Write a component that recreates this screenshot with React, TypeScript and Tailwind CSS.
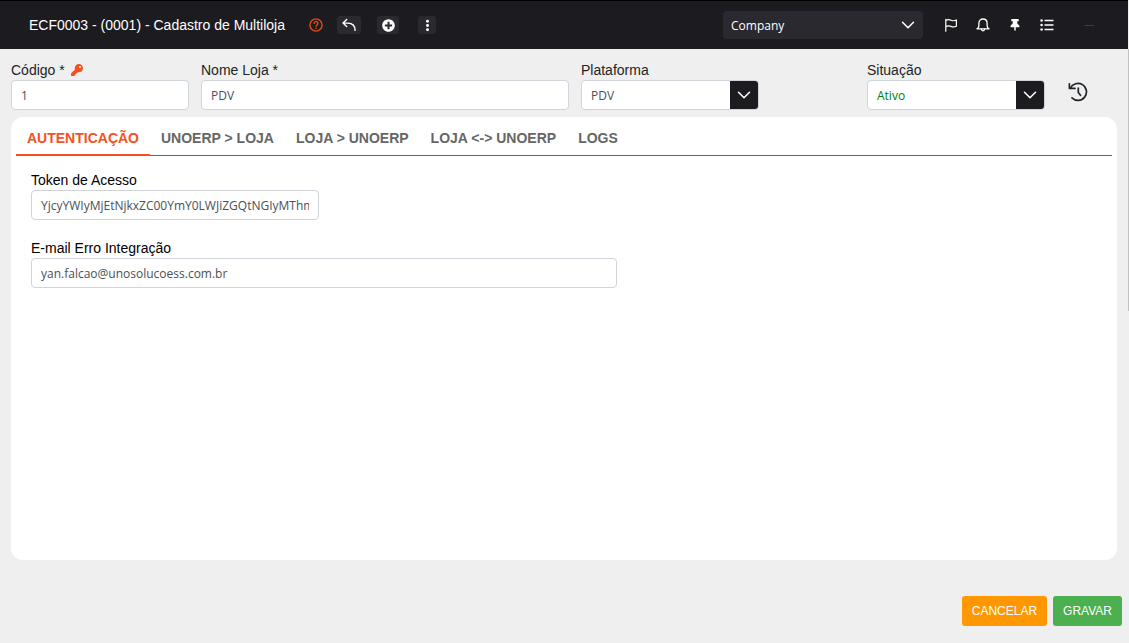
import type { ReactNode } from "react";
import { FaKey, FaPlusCircle, FaThumbtack } from "react-icons/fa";

interface IconProps {
  className?: string;
}

function ChevronIcon({ className }: IconProps) {
  return (
    <svg viewBox="0 0 14 14" fill="none" stroke="currentColor" strokeWidth="1.6" strokeLinecap="round" strokeLinejoin="round" className={className}>
      <path d="M1.5 4.3 7 9.7l5.5-5.4" />
    </svg>
  );
}

function HelpIcon({ className }: IconProps) {
  return (
    <svg viewBox="0 0 14 14" fill="none" stroke="currentColor" strokeWidth="1.4" strokeLinecap="round" strokeLinejoin="round" className={className}>
      <circle cx="7" cy="7" r="6.1" />
      <path d="M5.1 5.4a1.9 1.9 0 1 1 2.9 1.6c-.7.4-1 .7-1 1.300" />
      <path d="M7 10.300v.1" />
    </svg>
  );
}

function ReplyIcon({ className }: IconProps) {
  return (
    <svg viewBox="0 0 14 14" fill="none" stroke="currentColor" strokeWidth="1.4" strokeLinecap="round" strokeLinejoin="round" className={className}>
      <path d="M4.7 1.6 1 5.1l3.7 3.5M1.2 5.1h4.6c4.4 0 7.3 2.6 7.3 7.3" />
    </svg>
  );
}

function DotsIcon({ className }: IconProps) {
  return (
    <svg viewBox="0 0 14 14" fill="currentColor" className={className}>
      <circle cx="7" cy="2.4" r="1.6" />
      <circle cx="7" cy="7" r="1.6" />
      <circle cx="7" cy="11.6" r="1.6" />
    </svg>
  );
}

function FlagIcon({ className }: IconProps) {
  return (
    <svg viewBox="0 0 14 14" fill="none" stroke="currentColor" strokeWidth="1.2" strokeLinecap="round" strokeLinejoin="round" className={className}>
      <path d="M1.8 1.4v11.8M1.8 2.6c1.7-1.2 3.4-1.2 5.2-.4 1.8.8 3.5.8 5.4-.2v6.2c-1.9 1-3.6 1-5.4.2-1.8-.8-3.5-.8-5.2.3" />
    </svg>
  );
}

function BellIcon({ className }: IconProps) {
  return (
    <svg viewBox="0 0 14 14" fill="none" stroke="currentColor" strokeWidth="1.3" strokeLinecap="round" strokeLinejoin="round" className={className}>
      <path d="M1 10.8c1.4-.9 1.9-1.8 1.9-3.4V5.2C2.9 2.7 4.6 1 7 1s4.1 1.7 4.1 4.2v2.2c0 1.6.5 2.5 1.900 3.400z" />
      <path d="M5.4 11c.1 1.2.7 1.900 1.600 1.900s1.500-.7 1.600-1.900" />
    </svg>
  );
}

function ListIcon({ className }: IconProps) {
  return (
    <svg viewBox="0 0 14 14" fill="currentColor" className={className}>
      <path d="M4.5 1.800h9v1.500h-9zM4.500 6.300h9v1.500h-9zM4.500 10.800h9v1.500h-9z" />
      <circle cx="1.6" cy="2.5" r="1.300" />
      <circle cx="1.6" cy="7" r="1.300" />
      <circle cx="1.6" cy="11.5" r="1.300" />
    </svg>
  );
}

function HistoryIcon({ className }: IconProps) {
  return (
    <svg viewBox="0 0 20 20" fill="none" stroke="currentColor" strokeWidth="1.7" strokeLinecap="round" strokeLinejoin="round" className={className}>
      <path d="M1.4 1.800v4.600h5.600" />
      <path d="M2.300 6.200A8.500 8.500 0 1 1 4 15.900" />
      <path d="M10.300 6v4.500l2.200 2.800" />
    </svg>
  );
}

const fieldClass =
  "block h-[30px] w-full rounded border border-[#ced4da] bg-white px-[9px] font-['Open_Sans',sans-serif] text-xs";

interface FieldProps {
  id: string;
  label: string;
  value: string;
  icon?: ReactNode;
}

function TextField({ id, label, value, icon }: FieldProps) {
  return (
    <div>
      <label htmlFor={id} className="flex items-center gap-[6px] text-sm leading-5">
        {label}
        {icon}
      </label>
      <input id={id} type="text" defaultValue={value} className={`${fieldClass} text-[#495057]`} />
    </div>
  );
}

function SelectField({ id, label, value, color }: FieldProps & { color: string }) {
  return (
    <div>
      <label htmlFor={id} className="block text-sm leading-5">
        {label}
      </label>
      <div className="relative">
        <select id={id} defaultValue={value} className={`${fieldClass} appearance-none pt-px ${color}`}>
          <option>{value}</option>
        </select>
        <span className="pointer-events-none absolute inset-y-px right-px flex w-7 items-center justify-center rounded-r-[3px] bg-[#1c1b20] text-white">
          <ChevronIcon className="size-[14px]" />
        </span>
      </div>
    </div>
  );
}

function HeaderButton({ label, className, children }: { label: string; className: string; children: ReactNode }) {
  return (
    <button type="button" aria-label={label} className={`flex h-[18px] items-center justify-center rounded-[3px] bg-[#2a2930] ${className}`}>
      {children}
    </button>
  );
}

const tabs = ["AUTENTICAÇÃO", "UNOERP > LOJA", "LOJA > UNOERP", "LOJA <-> UNOERP", "LOGS"];

function Header() {
  return (
    <header className="flex h-[49px] items-center justify-between border-t border-black bg-[#1c1b20] pr-[34px] pl-[29px] text-white">
      <div className="flex items-center">
        <h1 className="text-sm">ECF0003 - (0001) - Cadastro de Multiloja</h1>
        <button type="button" aria-label="Ajuda" className="ml-6 text-[#e64a19]">
          <HelpIcon className="size-[14px]" />
        </button>
        <div className="ml-[14px] flex items-center gap-4">
          <HeaderButton label="Voltar" className="w-6">
            <ReplyIcon className="size-[14px]" />
          </HeaderButton>
          <HeaderButton label="Novo" className="w-[22px]">
            <FaPlusCircle className="size-[13px]" />
          </HeaderButton>
          <HeaderButton label="Mais" className="ml-[3px] w-[18px]">
            <DotsIcon className="size-[13px]" />
          </HeaderButton>
        </div>
      </div>
      <div className="flex items-center">
        <div className="relative w-[200px]">
          <select
            aria-label="Company"
            className="block h-7 w-full appearance-none rounded bg-[#2a2930] px-2 pt-px font-['Open_Sans',sans-serif] text-xs text-white"
          >
            <option>Company</option>
          </select>
          <ChevronIcon className="pointer-events-none absolute top-[7px] right-2 size-[14px]" />
        </div>
        <div className="ml-[21px] flex items-center gap-[18px]">
          <button type="button" aria-label="Sinalizar">
            <FlagIcon className="size-[14px]" />
          </button>
          <button type="button" aria-label="Notificações">
            <BellIcon className="size-[14px]" />
          </button>
          <button type="button" aria-label="Fixar">
            <FaThumbtack className="h-3 w-[14px]" />
          </button>
          <button type="button" aria-label="Lista">
            <ListIcon className="size-[14px]" />
          </button>
        </div>
        <span className="ml-[31px] h-px w-[9px] bg-[#6b3218]" />
      </div>
    </header>
  );
}

export default function App() {
  return (
    <div className="flex min-h-screen bg-[#efefef] font-['Liberation_Sans',Arial,sans-serif] text-[#212529]">
      <div className="flex min-w-0 flex-1 flex-col">
        <Header />
        <main className="flex flex-1 flex-col px-[11px] pt-[11px]">
          <div className="grid grid-cols-[178fr_368fr_178fr_84fr_178fr_60fr] gap-3">
            <TextField id="codigo" label="Código *" value="1" icon={<FaKey className="size-3 text-[#f4511e]" />} />
            <TextField id="nome" label="Nome Loja *" value="PDV" />
            <SelectField id="plataforma" label="Plataforma" value="PDV" color="text-[#495057]" />
            <div className="col-start-5">
              <SelectField id="situacao" label="Situação" value="Ativo" color="text-[#008000]" />
            </div>
            <button type="button" aria-label="Histórico" className="mt-[22px] ml-[11px] self-start">
              <HistoryIcon className="size-5" />
            </button>
          </div>

          <section className="mt-[7px] flex-1 rounded-xl bg-white px-[5px] text-black">
            <div role="tablist" className="flex h-[39px] border-b border-[#666666]">
              {tabs.map((tab, i) => (
                <button
                  key={tab}
                  type="button"
                  role="tab"
                  aria-selected={i === 0}
                  className={`-mb-px border-b-2 px-[11px] pt-[5px] text-sm font-bold ${
                    i === 0 ? "border-[#f4511e] text-[#f4511e]" : "border-transparent text-[#666666]"
                  }`}
                >
                  {tab}
                </button>
              ))}
            </div>
            <div role="tabpanel" className="flex flex-col gap-[18px] px-[15px] py-[14px]">
              <div className="w-[27%]">
                <TextField id="token" label="Token de Acesso" value="YjcyYWIyMjEtNjkxZC00YmY0LWJiZGQtNGIyMThmZDk4" />
              </div>
              <div className="w-[55%]">
                <TextField id="email" label="E-mail Erro Integração" value="yan.falcao@unosolucoess.com.br" />
              </div>
            </div>
          </section>
        </main>

        <footer className="flex justify-end gap-[6px] pt-9 pr-[6px] pb-[17px] text-xs text-white">
          <button type="button" className="h-[30px] rounded-[3px] bg-[#ff9800] px-[10px]">
            CANCELAR
          </button>
          <button type="button" className="h-[30px] rounded-[3px] bg-[#4caf50] px-[10px]">
            GRAVAR
          </button>
        </footer>
      </div>
      <div className="w-px bg-[#efefef] pt-[49px]">
        <div className="h-[262px] bg-[#c1c1c1]" />
      </div>
    </div>
  );
}
